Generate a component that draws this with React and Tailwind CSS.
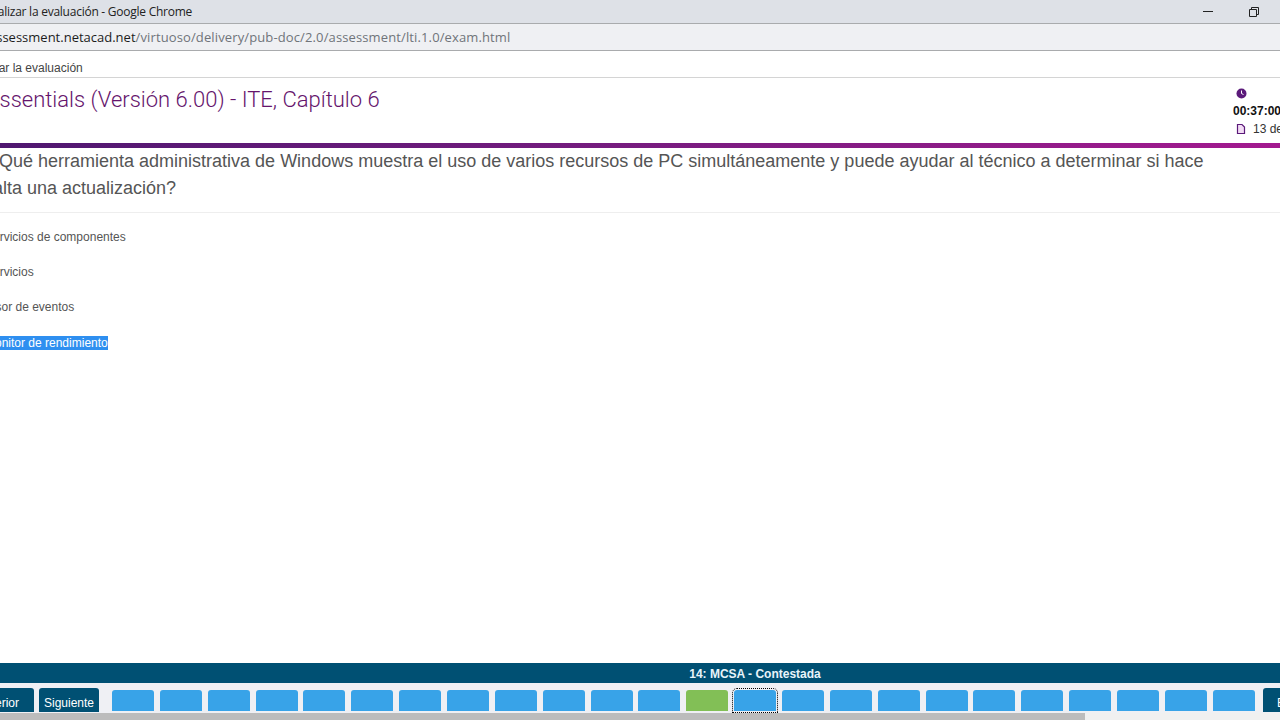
const tiles = Array.from({ length: 24 }, (_, i) => i + 1);

function Tile({ n }) {
  if (n === 14) {
    return (
      <div className="h-[21px] w-[42px] shrink-0 rounded-t-[3px] bg-[#38a3e8] outline-1 outline-dotted outline-offset-1 outline-black" />
    );
  }
  return <div className={`h-[21px] w-[42px] shrink-0 rounded-t-[3px] ${n === 13 ? "bg-[#82bf56]" : "bg-[#38a3e8]"}`} />;
}

export default function App() {
  return (
    <div className="flex h-[720px] w-[1280px] flex-col overflow-hidden bg-white font-['Liberation_Sans',sans-serif]">
      <div className="flex h-[24px] shrink-0 items-center border-b border-[#a9abad] bg-[#dee1e7]">
        <span className="ml-[-18px] shrink-0 whitespace-nowrap font-['Open_Sans',sans-serif] text-[12px] tracking-[-0.25px] text-[#222]">
          Finalizar la evaluación - Google Chrome
        </span>
        <div className="ml-auto flex items-center">
          <svg width="12" height="12" viewBox="0 0 12 12" className="mr-[34px]">
            <path d="M1 5.5h10" stroke="#222" strokeWidth="1" />
          </svg>
          <svg width="12" height="12" viewBox="0 0 12 12" className="mr-[20px]">
            <path d="M1.5 3.5h7v7h-7zM3.5 3.5v-2h7v7h-2" fill="none" stroke="#222" strokeWidth="1" />
          </svg>
        </div>
      </div>
      <div className="flex h-[27px] shrink-0 items-center border-b border-[#a9abad] bg-[#eff0f3] pt-[1px]">
        <span className="ml-[-11px] shrink-0 whitespace-nowrap font-['Open_Sans',sans-serif] text-[13px] text-[#1c1c1c]">
          assessment.netacad.net
          <span className="tracking-[0.125px] text-[#70747a]">/virtuoso/delivery/pub-doc/2.0/assessment/lti.1.0/exam.html</span>
        </span>
      </div>
      <div className="flex h-[27px] shrink-0 items-center border-b border-[#d4d4d4] pt-[8px]">
        <span className="ml-[-36px] shrink-0 whitespace-nowrap text-[12px] text-[#444]">Finalizar la evaluación</span>
      </div>
      <div className="flex h-[65px] shrink-0 justify-between">
        <h1 className="ml-[-13px] mt-[8px] shrink-0 whitespace-nowrap font-['Roboto',sans-serif] text-[22px] font-light leading-[28px] text-[#65146c]">
          Essentials (Versión 6.00) - ITE, Capítulo 6
        </h1>
        <div className="mr-[-20px] w-[67px] shrink-0 pt-[8px]">
          <div className="ml-[3px] flex h-[14px] items-center">
            <svg width="11" height="11" viewBox="0 0 11 11">
              <circle cx="5.5" cy="5.5" r="5" fill="#5b1a7a" />
              <path d="M5.5 2.5v3l2 1" fill="none" stroke="#fff" strokeWidth="1" />
            </svg>
          </div>
          <div className="mt-[3px] whitespace-nowrap text-[12px] font-bold leading-[16px] text-[#111]">00:37:00</div>
          <div className="mt-[2px] flex items-center whitespace-nowrap text-[12px] leading-[16px] text-[#333]">
            <svg width="10" height="12" viewBox="0 0 10 12" className="ml-[3px] mr-[7px] shrink-0">
              <path d="M1.5 1.5h4.5l2.5 2.5v6.5h-7z" fill="#f3ddf5" stroke="#5b1a7a" strokeWidth="1.2" />
            </svg>
            13 de 25
          </div>
        </div>
      </div>
      <div className="h-[5px] shrink-0 bg-gradient-to-r from-[#4f1770] to-[#a3198f]" />
      <div className="shrink-0 border-b border-[#eeeeee] pb-[10px] text-[18px] leading-[27px] text-[#555]">
        <div className="ml-[-12px] whitespace-nowrap">
          ¿Qué herramienta administrativa de Windows muestra el uso de varios recursos de PC simultáneamente y puede ayudar al técnico a determinar si hace
        </div>
        <div className="ml-[-12px] whitespace-nowrap">falta una actualización?</div>
      </div>
      <div className="flex flex-1 flex-col pt-[17px] text-[12px] leading-[14px] text-[#555]">
        <div className="ml-[-15px] h-[35px] whitespace-nowrap">Servicios de componentes</div>
        <div className="ml-[-15px] h-[35px] whitespace-nowrap">Servicios</div>
        <div className="ml-[-15px] h-[36px] whitespace-nowrap">Visor de eventos</div>
        <div className="ml-[-15px] h-[14px] whitespace-nowrap">
          <span className="bg-[#2e8ff0] text-white">Monitor de rendimiento</span>
        </div>
      </div>
      <div className="flex h-[20px] shrink-0 items-center justify-center bg-[#005073] pl-[230px] pt-[1px] text-[12px] font-bold text-[#e8f4fa]">
        14: MCSA - Contestada
      </div>
      <div className="flex h-[30px] shrink-0 items-start bg-[#eff0f4]">
        <div className="ml-[-30px] mt-[5px] flex h-[24px] w-[64px] shrink-0 items-center justify-center rounded-t-[3px] bg-[#005073] pr-[8px] pt-[6px] text-[12px] text-white">
          Anterior
        </div>
        <div className="ml-[5px] mt-[5px] flex h-[24px] w-[60px] shrink-0 items-center justify-center rounded-t-[3px] bg-[#005073] pt-[6px] text-[12px] text-white">
          Siguiente
        </div>
        <div className="ml-[13px] mt-[7px] flex w-[1143px] shrink-0 justify-between">
          {tiles.map((n) => (
            <Tile key={n} n={n} />
          ))}
        </div>
        <div className="ml-[8px] mt-[5px] flex h-[24px] w-[60px] shrink-0 items-center rounded-t-[3px] bg-[#005073] pl-[14px] pt-[6px] text-[12px] text-white">
          Enviar
        </div>
      </div>
      <div className="h-[7px] shrink-0 bg-[#f0f0f0]">
        <div className="h-full w-[1085px] bg-[#bcbcbc]" />
      </div>
    </div>
  );
}
